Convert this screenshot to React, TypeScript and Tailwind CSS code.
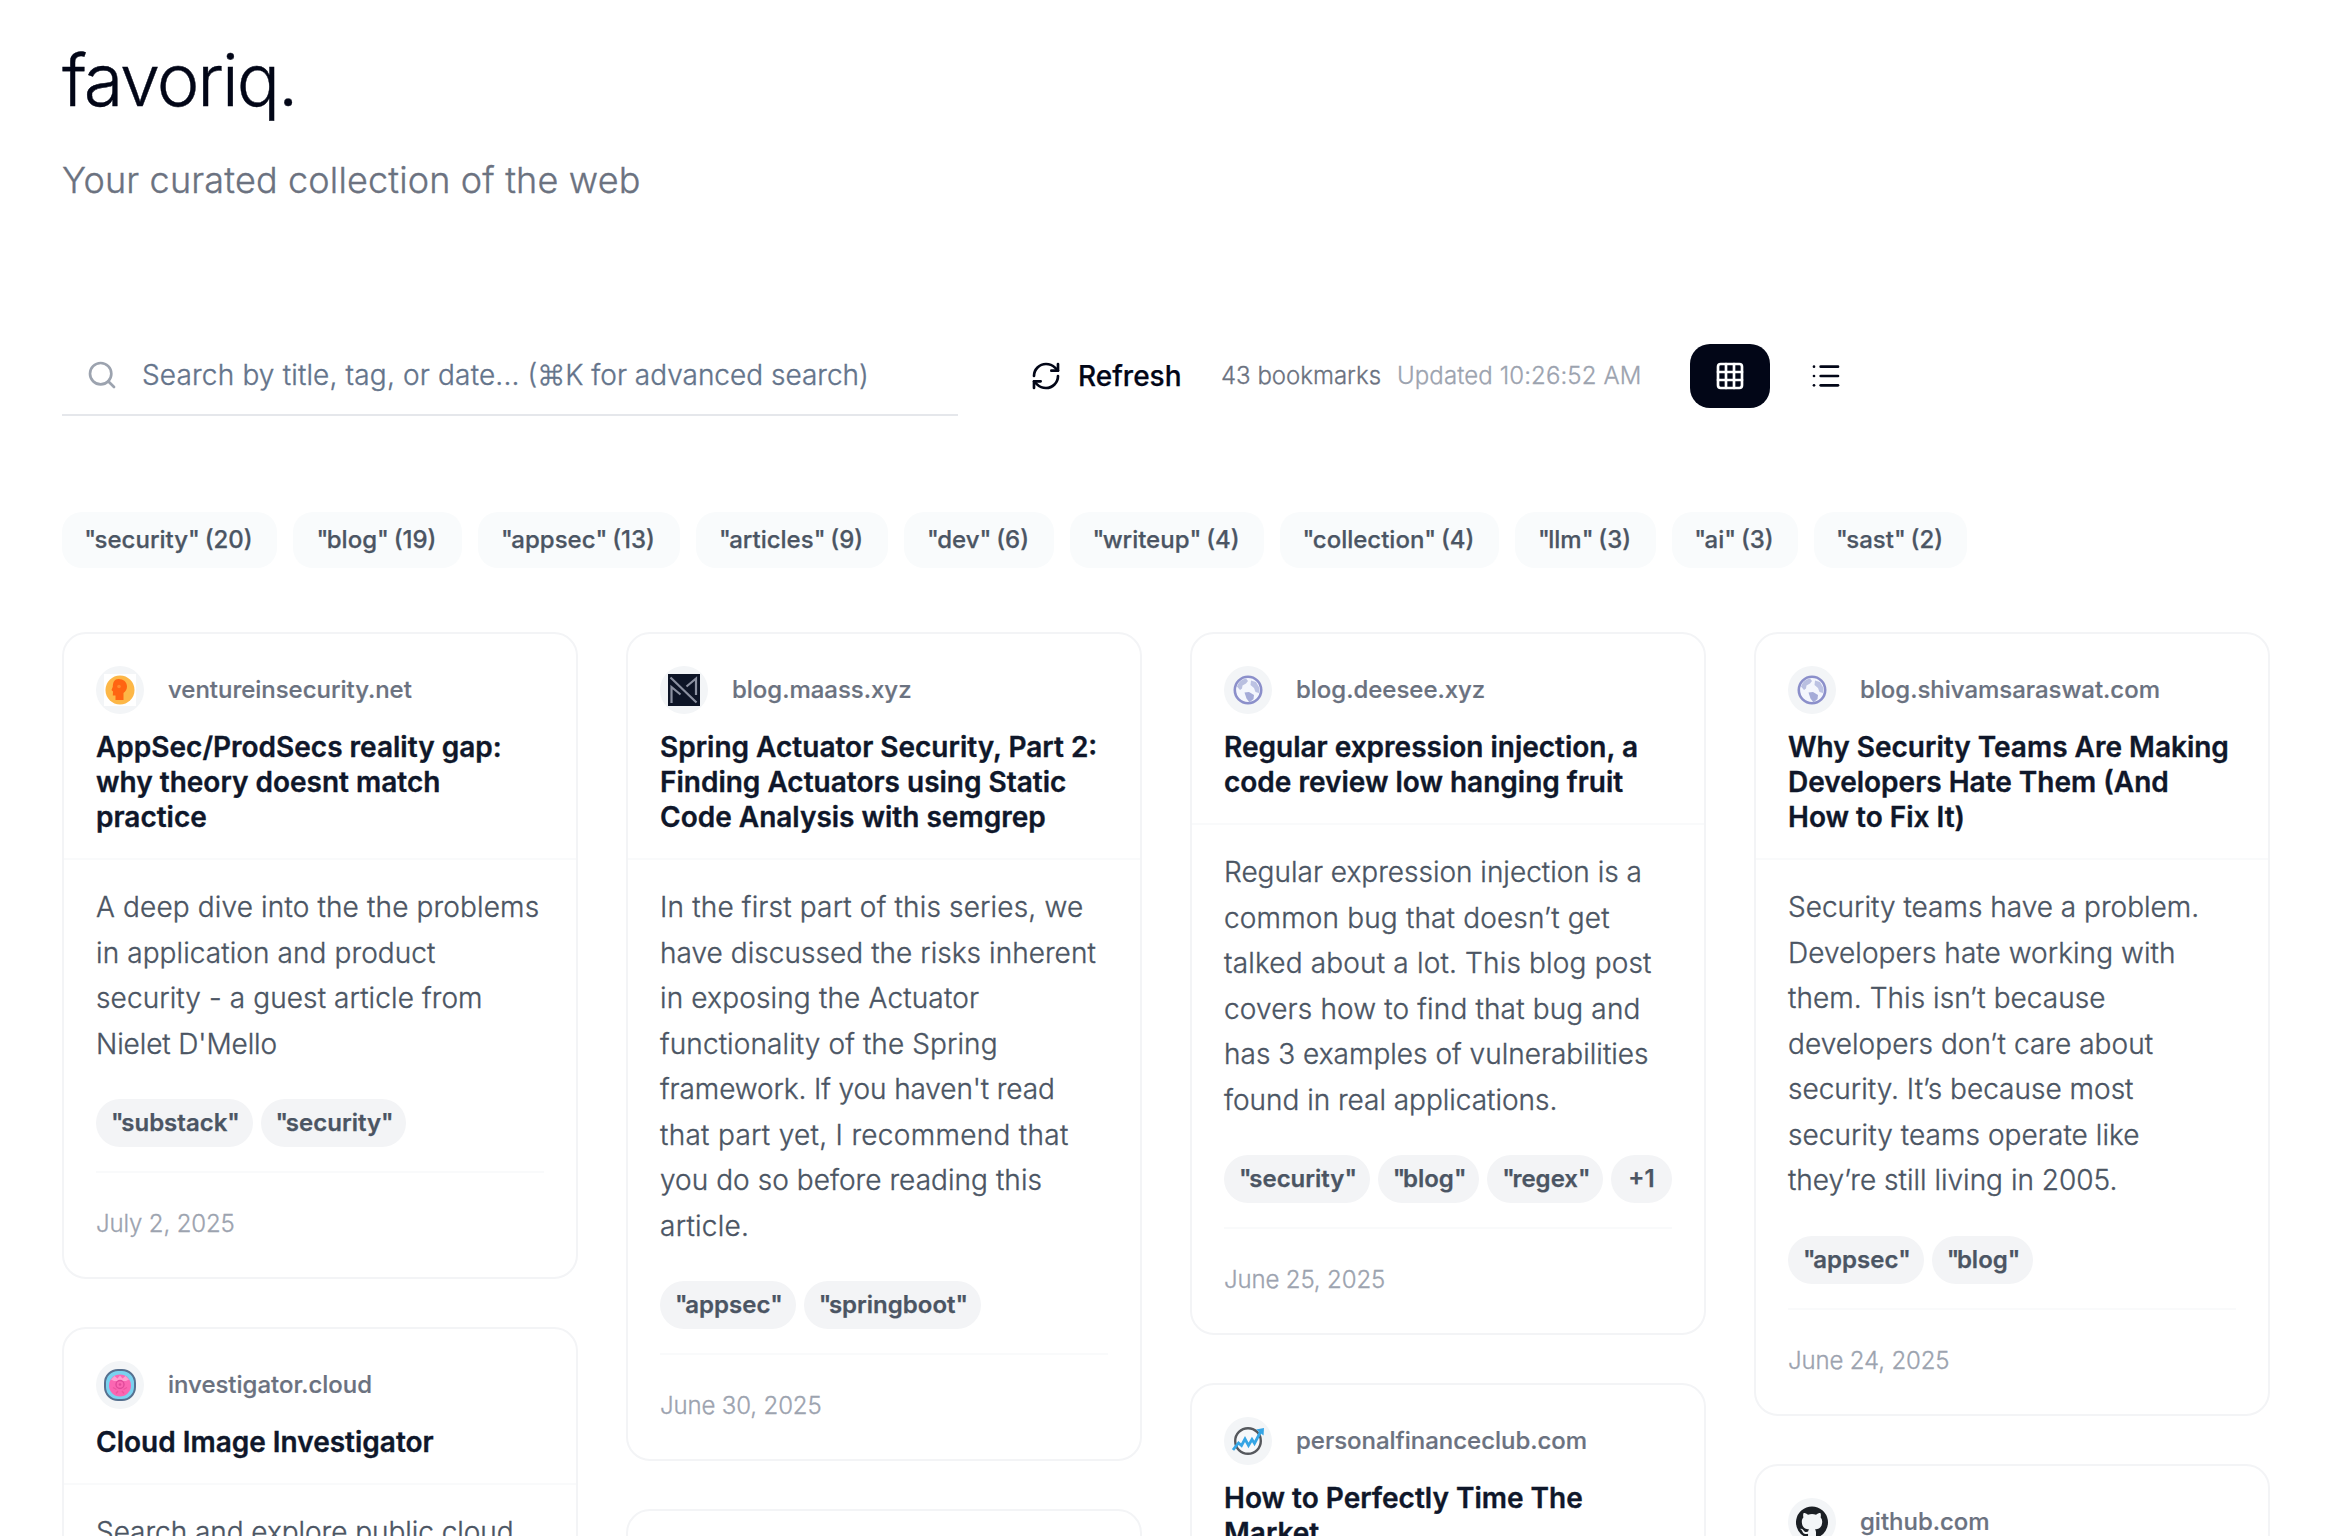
import React from "react";
import { Search, RefreshCw, Grid3x3, List } from "lucide-react";

const filters = [
  { name: "security", count: 20, width: 215 },
  { name: "blog", count: 19, width: 169 },
  { name: "appsec", count: 13, width: 202 },
  { name: "articles", count: 9, width: 192 },
  { name: "dev", count: 6, width: 150 },
  { name: "writeup", count: 4, width: 194 },
  { name: "collection", count: 4, width: 219 },
  { name: "llm", count: 3, width: 141 },
  { name: "ai", count: 3, width: 126 },
  { name: "sast", count: 2, width: 153 },
];

const HeadIcon = () => (
  <svg viewBox="0 0 32 32" className="size-8">
    <rect width="32" height="32" fill="#fff" />
    <circle cx="16" cy="16" r="14.5" fill="#fdb747" />
    <path d="M14.500 5c5 0 8.500 3 8.500 7.600 0 3-1.500 5-3.500 6.400V26h-8v-4.500H8.800l.2-4-1.500-1.500 1.300-3.200C8.800 8.300 10.500 5 14.500 5z" fill="#ff6412" />
    <circle cx="15" cy="12.500" r="1.800" fill="#ff8a2c" />
  </svg>
);

const MonogramIcon = () => (
  <svg viewBox="0 0 32 32" className="size-8">
    <rect width="32" height="32" fill="#0d1426" />
    <g fill="none" stroke="#8b90a0" strokeWidth="2.2">
      <path d="M3.500 29V13l9 7.500" />
      <path d="M2.500 3.500l26 25" />
      <path d="M18.500 12.500l9.500-8V21" />
    </g>
  </svg>
);

const GlobeIcon = () => (
  <svg viewBox="0 0 32 32" className="size-8">
    <circle cx="16" cy="16" r="13.200" fill="#f4f6fd" stroke="#8b8fca" strokeWidth="2.600" />
    <path d="M5 12.500C6.500 8 9.500 5.200 14 4.500l2 2.500-2 2.500-3.500 2-.5 3-2 1.500z" fill="#b9bfe0" />
    <path d="M19 6.500l5 1.500 3.500 6-.5 5-3.500-1-1.500-4-3.500-3z" fill="#bcc2e3" />
    <path d="M12.500 18.500l4.500-.5 5 3-.5 4-4 3.500-3-4z" fill="#a5abd8" />
  </svg>
);

const FlowerIcon = () => (
  <svg viewBox="0 0 32 32" className="size-8">
    <rect x="1" y="1" width="30" height="30" rx="13" fill="#7ad2f0" stroke="#56708f" strokeWidth="2" />
    <circle cx="16" cy="16.500" r="11" fill="#fb66b2" />
    <path d="M7 10.500l3.500-3.500 3 2.500L16 6.500l2.500 3 3-2.500 3.500 3.500-3 1.500H10z" fill="#ff9fd0" />
    <circle cx="16" cy="15.500" r="4" fill="none" stroke="#e04a9a" strokeWidth="1.400" />
    <circle cx="16" cy="15.500" r="1.300" fill="#e04a9a" />
    <path d="M9 18.500l3.500 2M23 18.500l-3.500 2M12 24.500l2-2.500M20 24.500L18 22" stroke="#ee559f" strokeWidth="1.400" />
  </svg>
);

const ChartIcon = () => (
  <svg viewBox="0 0 32 32" className="size-8">
    <circle cx="16" cy="16" r="12.800" fill="#f6f8fa" stroke="#55585d" strokeWidth="2.400" />
    <path d="M1 25l5.500-7 3 2.500 3.500-6.500 3.500 6.500 3.500-6 2.500 4L29 6" fill="none" stroke="#35a5e5" strokeWidth="2.800" />
    <path d="M24 4.500L32 3l-.5 7.500z" fill="#35a5e5" />
  </svg>
);

const GithubIcon = () => (
  <svg viewBox="0 0 24 24" className="size-8" fill="#1b1f24">
    <path d="M12 .3a12 12 0 0 0-3.800 23.380c.6.120.830-.260.830-.570v-2.230c-3.340.730-4.040-1.420-4.040-1.420-.550-1.390-1.330-1.760-1.330-1.760-1.090-.740.080-.730.080-.730 1.200.090 1.840 1.240 1.840 1.240 1.070 1.830 2.810 1.300 3.490 1 .110-.780.420-1.310.760-1.610-2.660-.300-5.470-1.330-5.470-5.930 0-1.310.470-2.380 1.240-3.220-.140-.300-.540-1.520.100-3.180 0 0 1.010-.320 3.300 1.230a11.500 11.500 0 0 1 6.020 0c2.280-1.550 3.290-1.230 3.290-1.230.640 1.660.240 2.880.120 3.180a4.650 4.650 0 0 1 1.230 3.220c0 4.610-2.810 5.620-5.480 5.920.420.360.810 1.100.810 2.220v3.290c0 .320.190.690.800.580A12 12 0 0 0 12 .3" />
  </svg>
);

/** A line of body text and its letter spacing in pixels. */
type Line = [string, number];

type Bookmark = {
  icon: () => React.ReactElement;
  domain: string;
  title: string[];
  body: Line[];
  tags: string[];
  date: string;
};

const columns: Bookmark[][] = [
  [
    {
      icon: HeadIcon,
      domain: "ventureinsecurity.net",
      title: ["AppSec/ProdSecs reality gap:", "why theory doesnt match", "practice"],
      body: [
        ["A deep dive into the the problems", 0.15],
        ["in application and product", 0.09],
        ["security - a guest article from", 0.1],
        ["Nielet D'Mello", -0.1],
      ],
      tags: ["substack", "security"],
      date: "July 2, 2025",
    },
    {
      icon: FlowerIcon,
      domain: "investigator.cloud",
      title: ["Cloud Image Investigator"],
      body: [["Search and explore public cloud", -0.04]],
      tags: [],
      date: "",
    },
  ],
  [
    {
      icon: MonogramIcon,
      domain: "blog.maass.xyz",
      title: ["Spring Actuator Security, Part 2:", "Finding Actuators using Static", "Code Analysis with semgrep"],
      body: [
        ["In the first part of this series, we", 0.17],
        ["have discussed the risks inherent", 0.05],
        ["in exposing the Actuator", 0.16],
        ["functionality of the Spring", 0.1],
        ["framework. If you haven't read", -0.1],
        ["that part yet, I recommend that", 0.3],
        ["you do so before reading this", 0.05],
        ["article.", 0.25],
      ],
      tags: ["appsec", "springboot"],
      date: "June 30, 2025",
    },
    { icon: GlobeIcon, domain: "", title: [], body: [], tags: [], date: "" },
  ],
  [
    {
      icon: GlobeIcon,
      domain: "blog.deesee.xyz",
      title: ["Regular expression injection, a", "code review low hanging fruit"],
      body: [
        ["Regular expression injection is a", 0],
        ["common bug that doesn’t get", 0.16],
        ["talked about a lot. This blog post", 0.17],
        ["covers how to find that bug and", 0.15],
        ["has 3 examples of vulnerabilities", 0.01],
        ["found in real applications.", -0.02],
      ],
      tags: ["security", "blog", "regex", "+1"],
      date: "June 25, 2025",
    },
    {
      icon: ChartIcon,
      domain: "personalfinanceclub.com",
      title: ["How to Perfectly Time The", "Market"],
      body: [],
      tags: [],
      date: "",
    },
  ],
  [
    {
      icon: GlobeIcon,
      domain: "blog.shivamsaraswat.com",
      title: ["Why Security Teams Are Making", "Developers Hate Them (And", "How to Fix It)"],
      body: [
        ["Security teams have a problem.", 0.01],
        ["Developers hate working with", 0.06],
        ["them. This isn’t because", 0.06],
        ["developers don’t care about", 0.05],
        ["security. It’s because most", 0.01],
        ["security teams operate like", 0.07],
        ["they’re still living in 2005.", 0.01],
      ],
      tags: ["appsec", "blog"],
      date: "June 24, 2025",
    },
    { icon: GithubIcon, domain: "github.com", title: [], body: [], tags: [], date: "" },
  ],
];

function Card({ item }: { item: Bookmark }) {
  const Icon = item.icon;
  return (
    <article className="min-h-[300px] shrink-0 rounded-[24px] border-2 border-[#f3f4f6] bg-white">
      <header className="border-b-2 border-[#f9fafb] px-8 pt-8 pb-[23px]">
        <div className="flex h-12 items-center gap-6">
          <span className="flex size-12 items-center justify-center rounded-full bg-[#f3f5f7]">
            <Icon />
          </span>
          <span className="text-[24px] leading-8 font-medium tracking-[-0.02px] text-[#6b7280] [-webkit-text-stroke:0.2px]">{item.domain}</span>
        </div>
        <h3 className="mt-4 text-[28px] leading-[35px] font-semibold whitespace-nowrap text-[#0f172a] [-webkit-text-stroke:0.35px]">
          {item.title.map((l) => (
            <span key={l} className="block">{l}</span>
          ))}
        </h3>
      </header>
      <div className="px-8 pt-[25px]">
        <p className="text-[28px] leading-[45.5px] font-light whitespace-nowrap text-[#4b5563] [-webkit-text-stroke:0.35px]">
          {item.body.map(([text, spacing]) => (
            <span key={text} className="block" style={{ letterSpacing: spacing }}>{text}</span>
          ))}
        </p>
        {item.tags.length > 0 && (
          <div className="mt-8 flex gap-2">
            {item.tags.map((t) => (
              <span key={t} className="flex h-12 items-center rounded-full bg-[#f3f4f6] px-[15px] text-[24px] font-semibold whitespace-nowrap text-[#4b5563] [-webkit-text-stroke:0.25px]">
                {t.startsWith("+") ? (
                  <span className="px-0.5">{t}</span>
                ) : (
                  <span>
                    <span className="tracking-[-2.3px]">"</span>
                    {t}
                    <span className="tracking-[-2.3px]">"</span>
                  </span>
                )}
              </span>
            ))}
          </div>
        )}
        {item.date && (
          <div className="mt-6 border-t-2 border-[#f9fafb] pt-[35px] pb-[37px] text-[24px] leading-8 font-light tracking-[-0.14px] text-[#9ca3af] [-webkit-text-stroke:0.3px]">
            {item.date}
          </div>
        )}
      </div>
    </article>
  );
}

export default function App() {
  return (
    <main className="h-[1536px] w-[2346px] overflow-hidden bg-white px-[62px] font-['Inter',sans-serif]">
      <header className="pt-[44px]">
        <h1 className="text-[72px] leading-[72px] font-light tracking-[-0.028em] text-[#020617] [-webkit-text-stroke:0.4px]">favoriq.</h1>
        <p className="mt-[36px] text-[36px] leading-[56px] font-light tracking-[0.16px] text-[#6b7280] [-webkit-text-stroke:0.35px]">
          Your curated collection of the web
        </p>
      </header>

      <section className="mt-[128px] flex h-20 items-center">
        <div className="flex h-20 w-[896px] items-center border-b-2 border-[#e5e7eb] pl-6">
          <Search className="size-8 text-[#9ca3af]" strokeWidth={2} />
          <span className="ml-6 text-[28px] font-light whitespace-nowrap text-[#64748b] [-webkit-text-stroke:0.35px]">
            <span className="tracking-[0.17px]">Search by title, tag, or date... </span>
            <span>(⌘K for advanced search)</span>
          </span>
        </div>
        <button className="ml-[72px] flex w-[191px] items-center gap-4 text-[28px] font-medium text-[#020617] [-webkit-text-stroke:0.25px]">
          <RefreshCw className="size-8" />
          Refresh
        </button>
        <div className="w-[176px] text-[24px] font-light whitespace-nowrap text-[#6b7280] [-webkit-text-stroke:0.3px]">43 bookmarks</div>
        <div className="w-[293px] text-[24px] font-light tracking-[0.11px] whitespace-nowrap text-[#9ca3af] [-webkit-text-stroke:0.3px]">
          Updated 10:26:52 AM
        </div>
        <button className="flex h-16 w-20 items-center justify-center rounded-[20px] bg-[#020617] text-white">
          <Grid3x3 className="size-8" />
        </button>
        <button className="ml-4 flex h-16 w-20 items-center justify-center text-[#020617]">
          <List className="size-8" />
        </button>
      </section>

      <nav className="mt-24 flex h-[56px] gap-4">
        {filters.map((f) => (
          <span
            key={f.name}
            className="flex shrink-0 items-center justify-center rounded-[20px] bg-[#f9fbfc] pr-0.5 text-[24px] font-medium whitespace-pre text-[#4b5563] [-webkit-text-stroke:0.25px]"
            style={{ width: f.width }}
          >
            <span className="tracking-[-1.6px]">"</span>
            {f.name}
            <span className="tracking-[-1.6px]">"</span>
            {` (${f.count})`}
          </span>
        ))}
      </nav>

      <section className="mt-16 grid w-[2208px] grid-cols-4 gap-12">
        {columns.map((col, i) => (
          <div key={i} className="flex flex-col gap-12">
            {col.map((item, j) => (
              <Card key={j} item={item} />
            ))}
          </div>
        ))}
      </section>
    </main>
  );
}
